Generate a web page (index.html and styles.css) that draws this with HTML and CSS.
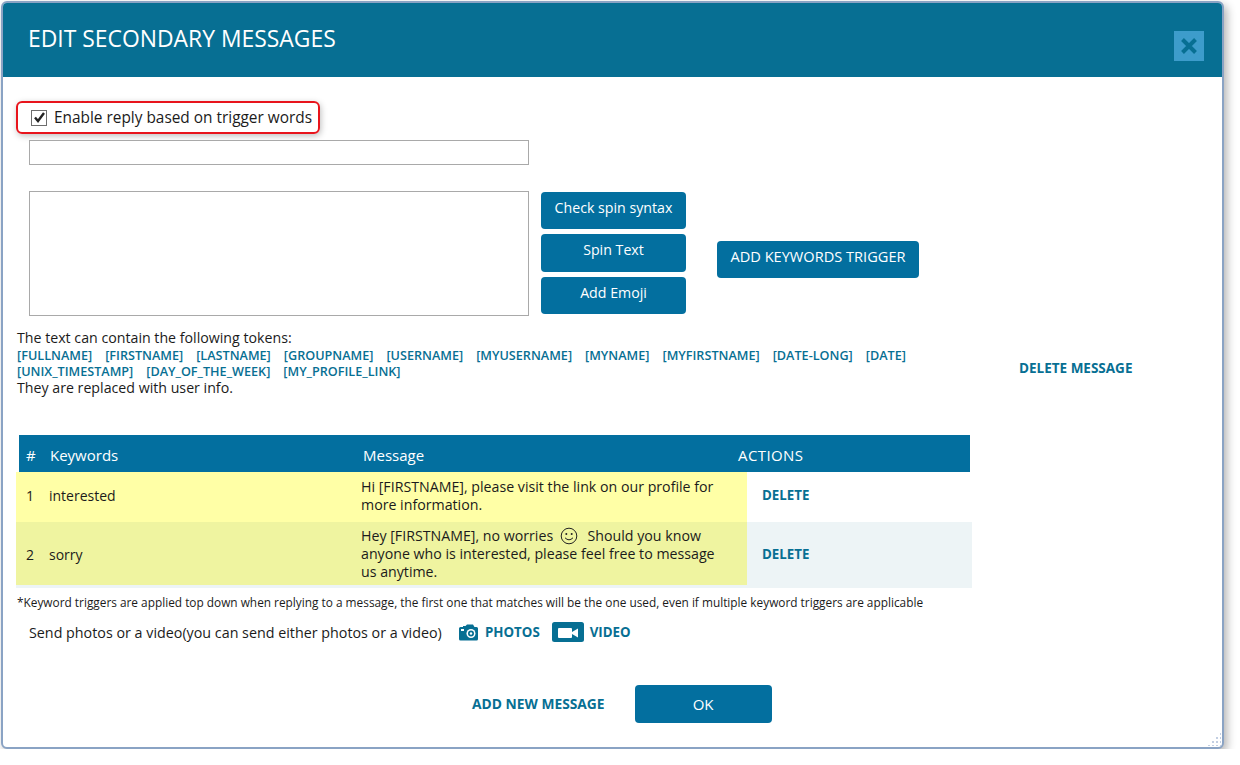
FILE: index.html
```html
<!DOCTYPE html>
<html lang="en">
<head>
  <meta charset="UTF-8">
  <title>Edit Secondary Messages</title>
  <link rel="stylesheet" href="styles.css">
</head>
<body>

  <div class="dialog">
    <div class="dialog-head">
      <h1>EDIT SECONDARY MESSAGES</h1>
      <button class="close" aria-label="Close">
        <svg width="18" height="18" viewBox="0 0 18 18"><path d="M2.5 2.5L15.5 15.5M15.5 2.5L2.5 15.5" stroke="#076f93" stroke-width="4" fill="none"/></svg>
      </button>
    </div>

    <div class="dialog-body">
      <label class="trigger-check">
        <span class="checkbox">
          <svg width="13" height="13" viewBox="0 0 13 13"><path d="M2 6.5L5 10L11 2" stroke="#222" stroke-width="2.4" fill="none"/></svg>
        </span>
        Enable reply based on trigger words
      </label>

      <input class="keywords-input" type="text">

      <div class="editor-row">
        <textarea class="message-input"></textarea>
        <div class="editor-buttons">
          <button class="btn">Check spin syntax</button>
          <button class="btn btn-mid">Spin Text</button>
          <button class="btn">Add Emoji</button>
        </div>
        <button class="btn btn-add">ADD KEYWORDS TRIGGER</button>
      </div>

      <div class="tokens-row">
        <div class="tokens">
          <div>The text can contain the following tokens:</div>
          <div class="token-list">
            <a>[FULLNAME]</a><a>[FIRSTNAME]</a><a>[LASTNAME]</a><a>[GROUPNAME]</a><a>[USERNAME]</a><a>[MYUSERNAME]</a><a>[MYNAME]</a><a>[MYFIRSTNAME]</a><a>[DATE-LONG]</a><a>[DATE]</a><a>[UNIX_TIMESTAMP]</a><a>[DAY_OF_THE_WEEK]</a><a>[MY_PROFILE_LINK]</a>
          </div>
          <div>They are replaced with user info.</div>
        </div>
        <a class="link delete-message">DELETE MESSAGE</a>
      </div>

      <div class="triggers">
        <div class="triggers-head">
          <span class="col-num">#</span>
          <span class="col-key">Keywords</span>
          <span class="col-msg">Message</span>
          <span class="col-act">ACTIONS</span>
        </div>
        <div class="trigger-row">
          <div class="trigger-main yellow">
            <span class="col-num">1</span>
            <span class="col-key">interested</span>
            <span class="col-msg">Hi [FIRSTNAME], please visit the link on our profile for<br>more information.</span>
          </div>
          <a class="link row-delete">DELETE</a>
        </div>
        <div class="trigger-row alt">
          <div class="trigger-main green">
            <span class="col-num">2</span>
            <span class="col-key">sorry</span>
            <span class="col-msg">Hey [FIRSTNAME], no worries <svg class="smiley" width="18" height="18" viewBox="0 0 18 18"><circle cx="9" cy="9" r="7.8" fill="none" stroke="#222" stroke-width="1"/><circle cx="6.3" cy="7" r="1" fill="#222"/><circle cx="11.7" cy="7" r="1" fill="#222"/><path d="M5 10.8Q9 14.8 13 10.8" fill="none" stroke="#222" stroke-width="1"/></svg> Should you know<br>anyone who is interested, please feel free to message<br>us anytime.</span>
          </div>
          <a class="link row-delete">DELETE</a>
        </div>
      </div>

      <p class="note">*Keyword triggers are applied top down when replying to a message, the first one that matches will be the one used, even if multiple keyword triggers are applicable</p>

      <div class="media-row">
        <span class="media-label">Send photos or a video(you can send either photos or a video)</span>
        <svg class="camera" width="21" height="17" viewBox="0 0 21 17"><path d="M1 4.5Q1 3 2.5 3H5V2H7.5L9 0.5H15L16.5 3H18.5Q20 3 20 4.5V15Q20 16.5 18.5 16.5H2.5Q1 16.5 1 15Z" fill="#076f93"/><circle cx="13" cy="9.5" r="4.5" fill="#fff"/><circle cx="13" cy="9.5" r="3" fill="#076f93"/><circle cx="13" cy="9.5" r="1.2" fill="#fff"/><rect x="3" y="5" width="3" height="2" fill="#fff"/></svg>
        <a class="link media-link">PHOTOS</a>
        <svg class="video" width="32" height="20" viewBox="0 0 32 20"><rect width="32" height="20" rx="2.5" fill="#076f93"/><rect x="6" y="6" width="14" height="10" rx="1" fill="#fff"/><path d="M20 10L26 6.5V15.5L20 12Z" fill="#fff"/></svg>
        <a class="link media-link">VIDEO</a>
      </div>

      <div class="dialog-foot">
        <a class="link add-message">ADD NEW MESSAGE</a>
        <button class="btn btn-ok">OK</button>
      </div>
    </div>

    <div class="grip"></div>
  </div>

</body>
</html>
```

FILE: styles.css
```css
body {
  margin: 0;
  background: #fff;
  font-family: "Open Sans", Arial, sans-serif;
  font-size: 14.2px;
  color: #1b1b1b;
}
.dialog {
  position: relative;
  width: 1219px;
  height: 744px;
  margin: 1px 0 0 1px;
  border: 2px solid #8aa3c4;
  border-radius: 6px;
  background: #fff;
  box-shadow: 3px 4px 10px rgba(0, 0, 0, 0.3);
}
.dialog-head {
  display: flex;
  justify-content: space-between;
  align-items: center;
  height: 74px;
  padding: 0 18px 0 25px;
  background: #076f93;
  border-radius: 4px 4px 0 0;
}
h1 {
  margin: 0 0 4px;
  font-size: 22.9px;
  font-weight: 400;
  color: #fff;
}
.close {
  display: flex;
  align-items: center;
  justify-content: center;
  width: 30px;
  height: 30px;
  margin-top: 12px;
  padding: 0;
  border: 0;
  background: #3d9ccb;
}
.dialog-body {
  padding: 24px 0 0 13px;
}
.trigger-check {
  display: flex;
  align-items: center;
  gap: 7px;
  width: 304px;
  height: 33px;
  padding-left: 13px;
  box-sizing: border-box;
  border: 2px solid #e8141c;
  border-radius: 6px;
  box-shadow: 1px 2px 6px rgba(0, 0, 0, 0.25);
  font-size: 15.4px;
}
.checkbox {
  display: flex;
  align-items: center;
  justify-content: center;
  width: 16px;
  height: 16px;
  box-sizing: border-box;
  border: 1px solid #6d6d6d;
}
.keywords-input {
  display: block;
  width: 500px;
  height: 25px;
  box-sizing: border-box;
  margin: 6px 0 0 13px;
  border: 1px solid #a9a9a9;
}
.editor-row {
  display: flex;
  align-items: center;
  margin: 26px 0 0 13px;
}
.message-input {
  width: 500px;
  height: 125px;
  box-sizing: border-box;
  border: 1px solid #a9a9a9;
  resize: none;
}
.editor-buttons {
  display: flex;
  flex-direction: column;
  gap: 5px;
  margin: 0 0 2px 12px;
}
.btn {
  border: 0;
  border-radius: 4px;
  background: #036f9f;
  color: #fff;
  font-family: inherit;
  font-size: 14.2px;
}
.editor-buttons .btn {
  width: 145px;
  height: 37px;
  padding-bottom: 7px;
}
.editor-buttons .btn-mid {
  height: 38px;
}
.btn-add {
  width: 202px;
  height: 37px;
  margin: 12px 0 0 31px;
  padding-bottom: 9px;
  font-size: 14.6px;
}
.tokens-row {
  display: flex;
  align-items: center;
  margin-top: 13px;
}
.tokens {
  width: 960px;
  padding-left: 1px;
  line-height: 17px;
}
.token-list {
  margin-top: 1px;
  font-size: 12.65px;
  font-weight: 600;
  line-height: 16px;
}
.token-list a {
  color: #076f93;
  margin-right: 13px;
  display: inline-block;
}
.link {
  color: #076f93;
  font-weight: 700;
  font-size: 13.3px;
}
.delete-message {
  margin: 10px 0 0 42px;
  font-size: 13.5px;
}
.triggers {
  width: 956px;
  margin-top: 39px;
}
.triggers-head {
  display: flex;
  align-items: center;
  height: 37px;
  box-sizing: border-box;
  padding-top: 2px;
  margin: 0 3px;
  width: 951px;
  background: #036f9f;
  color: #fff;
  font-size: 15px;
}
.trigger-row {
  display: flex;
  align-items: center;
}
.trigger-row.alt {
  background: #edf4f6;
  height: 66px;
  align-items: flex-start;
}
.trigger-main {
  display: flex;
  align-items: center;
  width: 731px;
}
.yellow {
  background: #ffffa6;
  height: 50px;
  box-sizing: border-box;
  padding-bottom: 3px;
}
.green {
  background: #eff4a0;
  height: 63px;
}
.col-num {
  width: 31px;
  padding-left: 7px;
  box-sizing: border-box;
}
.col-key {
  width: 313px;
}
.col-act {
  letter-spacing: 0.4px;
}
.trigger-main .col-num {
  width: 33px;
  padding-left: 10px;
  font-size: 14px;
}
.trigger-main .col-key {
  width: 312px;
  font-size: 14px;
}
.green .col-num,
.green .col-key {
  padding-top: 2px;
}
.triggers-head .col-msg {
  width: 375px;
}
.trigger-main .col-msg {
  width: 365px;
  line-height: 18px;
}
.smiley {
  vertical-align: -4px;
  margin: 0 6px 0 3px;
}
.row-delete {
  margin: 0 0 4px 15px;
}
.alt .row-delete {
  margin: 23px 0 0 15px;
}
.note {
  margin: 6px 0 0 1px;
  font-size: 11.85px;
}
.media-row {
  display: flex;
  align-items: center;
  margin: 12px 0 0 13px;
}
.media-label {
  width: 429px;
  font-size: 14.3px;
}
.media-link {
  margin: 0 12px 0 6px;
}
.dialog-foot {
  display: flex;
  align-items: center;
  gap: 30px;
  margin: 43px 0 0 456px;
}
.add-message {
  font-size: 13.8px;
  padding-bottom: 2px;
}
.btn-ok {
  width: 137px;
  height: 38px;
  font-size: 15px;
}
.grip {
  position: absolute;
  right: 1px;
  bottom: 1px;
  width: 14px;
  height: 14px;
  background-image: radial-gradient(#c3cfe2 1.2px, transparent 1.3px);
  background-size: 4px 4px;
  clip-path: polygon(100% 0, 100% 100%, 0 100%);
}
```
